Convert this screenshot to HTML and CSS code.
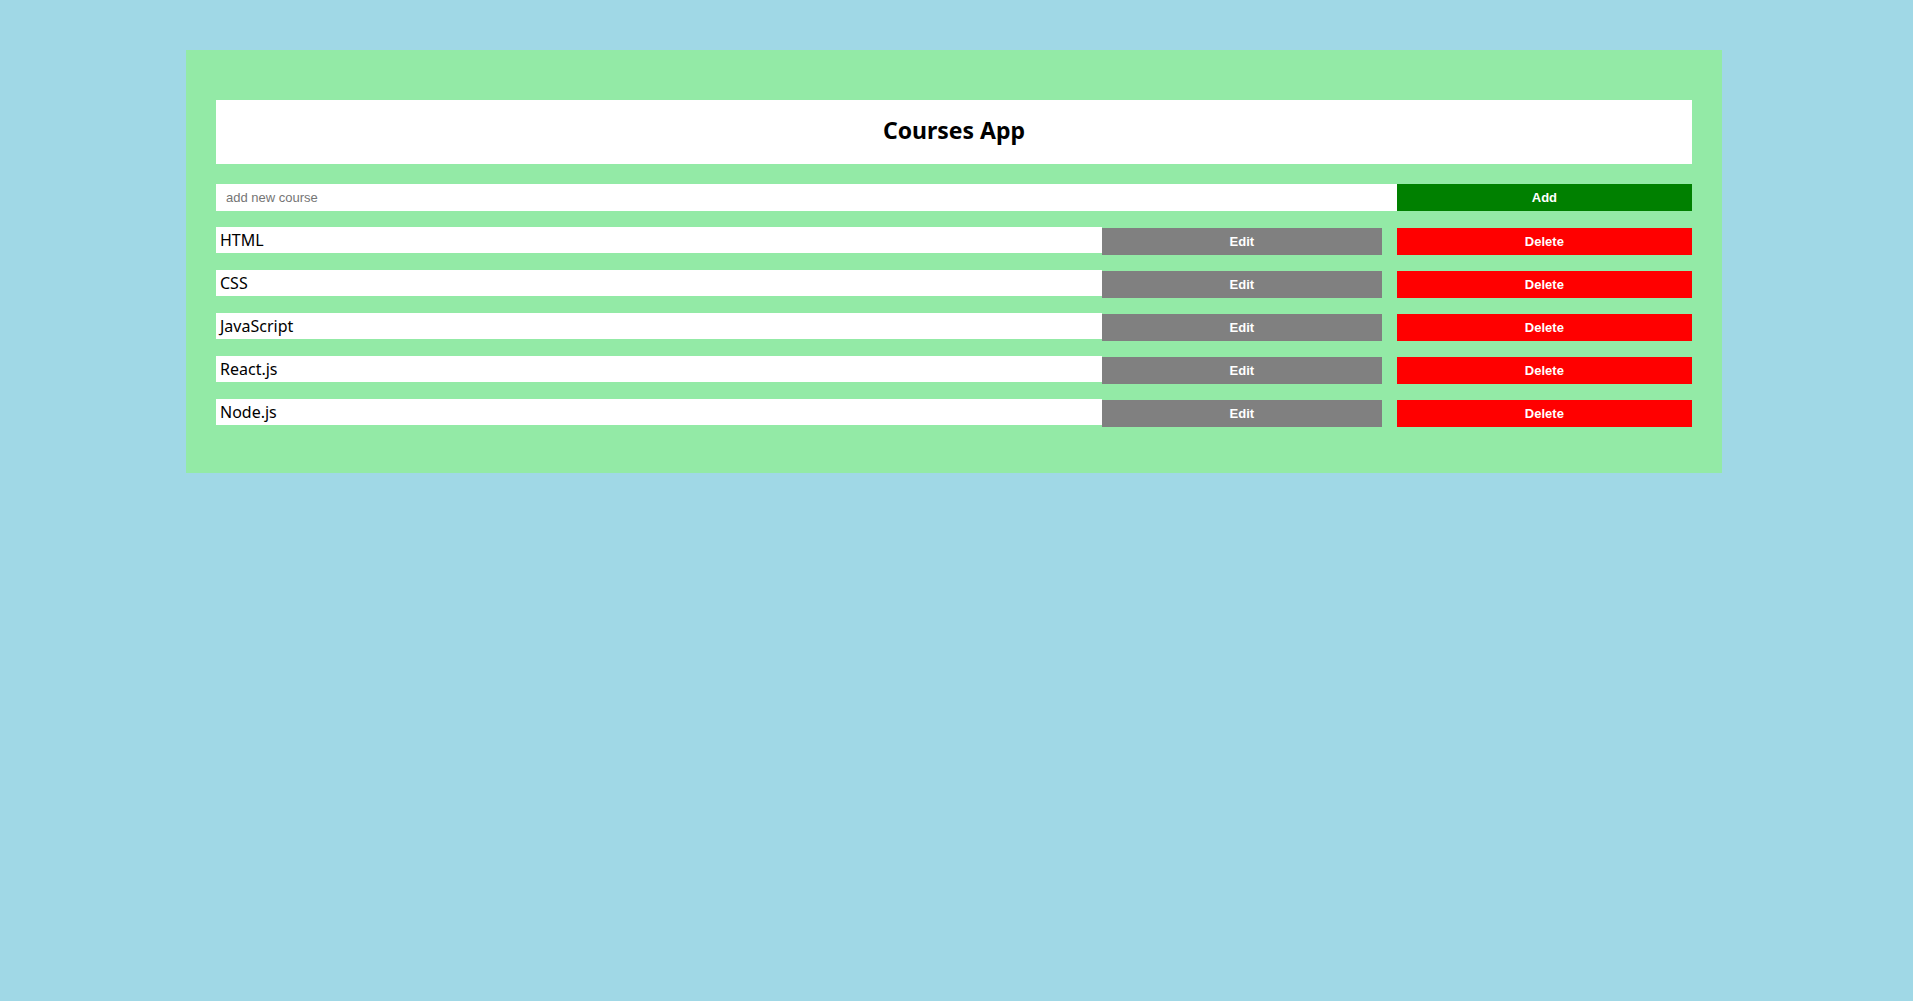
FILE: index.html
```html
<!DOCTYPE html>
<html lang="en">
<head>
<meta charset="utf-8">
<title>Courses App</title>
<link rel="stylesheet" href="styles.css">
</head>
<body>
<div class="app">
  <header class="app-header"><h1>Courses App</h1></header>
  <form class="add-form">
    <input type="text" class="add-input" placeholder="add new course">
    <button type="button" class="btn btn-add">Add</button>
  </form>
  <ul class="course-list">
    <li class="course"><span class="course-name">HTML</span><button class="btn btn-edit">Edit</button><button class="btn btn-delete">Delete</button></li>
    <li class="course"><span class="course-name">CSS</span><button class="btn btn-edit">Edit</button><button class="btn btn-delete">Delete</button></li>
    <li class="course"><span class="course-name">JavaScript</span><button class="btn btn-edit">Edit</button><button class="btn btn-delete">Delete</button></li>
    <li class="course"><span class="course-name">React.js</span><button class="btn btn-edit">Edit</button><button class="btn btn-delete">Delete</button></li>
    <li class="course"><span class="course-name">Node.js</span><button class="btn btn-edit">Edit</button><button class="btn btn-delete">Delete</button></li>
  </ul>
</div>
</body>
</html>
```
FILE: styles.css
```css
* { box-sizing: border-box; }

body {
  margin: 0;
  background: #a0d8e6;
  font-family: "Noto Sans", "Open Sans", sans-serif;
}

.app {
  width: 1536px;
  margin: 50px 0 0 186px;
  padding: 50px 30px 46px;
  background: #93eaa6;
}

.app-header {
  height: 64px;
  background: #fff;
  display: flex;
  align-items: center;
  justify-content: center;
  padding-bottom: 4px;
  margin-bottom: 20px;
}

.app-header h1 {
  margin: 0;
  font-size: 23px;
  font-weight: 700;
  color: #000;
}

.add-form {
  display: flex;
  height: 27px;
  margin-bottom: 16px;
}

.add-input {
  flex: 0 0 80%;
  height: 27px;
  border: none;
  outline: none;
  padding: 0 10px;
  font-family: "Liberation Sans", Arial, sans-serif;
  font-size: 13px;
  background: #fff;
}

.add-input::placeholder { color: #757575; }

.btn {
  border: none;
  color: #fff;
  font-family: "Liberation Sans", Arial, sans-serif;
  font-weight: 700;
  font-size: 13px;
  height: 27px;
  padding: 0;
  cursor: pointer;
}

.btn-add {
  flex: 0 0 20%;
  background: #008000;
}

.course-list {
  list-style: none;
  margin: 0;
  padding: 0;
}

.course {
  display: flex;
  align-items: flex-start;
  height: 28px;
  margin-bottom: 15px;
}

.course:last-child { margin-bottom: 0; }

.course-name {
  flex: 0 0 60%;
  height: 26px;
  background: #fff;
  padding: 0 4px;
  font-size: 16px;
  line-height: 26px;
  color: #000;
}

.btn-edit {
  flex: 0 0 19%;
  margin: 1px 1% 0 0;
  background: #808080;
}

.btn-delete {
  flex: 0 0 20%;
  margin-top: 1px;
  background: #ff0000;
}
```
